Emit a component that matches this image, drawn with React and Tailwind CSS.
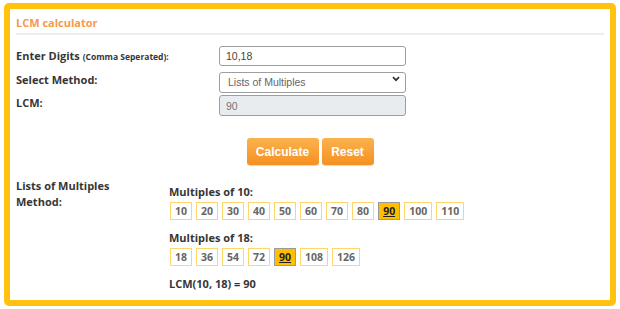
import React from "react";

const m10 = [10, 20, 30, 40, 50, 60, 70, 80, 90, 100, 110];
const m18 = [18, 36, 54, 72, 90, 108, 126];

const Box = ({ n, hit }) => (
  <span
    className={
      hit
        ? "h-[18px] px-[4px] flex items-center border border-[#9a9a9a] bg-[#ffbf00] text-[10.5px] font-bold underline text-[#222]"
        : "h-[18px] px-[4px] flex items-center border border-[#ffd66b] bg-white text-[10.5px] text-[#666]"
    }
  >
    {n}
  </span>
);

const App = () => {
  return (
    <div className="w-[620px] h-[309px] bg-white pt-[3px] pl-[4px]">
      <div className="w-[612px] h-[303px] border-[6px] border-[#ffc30f] rounded-[5px] bg-white font-['Open_Sans',sans-serif] text-[#363636]">
        {/* title */}
        <div className="mx-[6px] pt-[5px] border-b-2 border-[#eeeeee] h-[26px]">
          <h2 className="text-[11px] leading-[18px] font-bold text-[#f7984a]">LCM calculator</h2>
        </div>

        {/* form */}
        <div className="mx-[6px] mt-[11px] flex flex-col gap-[4px]">
          <div className="flex items-center h-[20px]">
            <label className="w-[203px] text-[11px] font-bold">
              Enter Digits <span className="text-[8.5px]">(Comma Seperated):</span>
            </label>
            <input
              defaultValue="10,18"
              className="w-[187px] h-[20px] border border-[#9e9e9e] rounded-[3px] px-[6px] text-[10.5px] text-[#444] font-['Liberation_Sans',sans-serif] outline-none"
            />
          </div>
          <div className="flex items-center h-[21px]">
            <label className="w-[203px] text-[11px] font-bold">Select Method:</label>
            <div className="relative">
              <select className="appearance-none w-[187px] h-[21px] border border-[#9e9e9e] rounded-[3px] pl-[8px] text-[10.5px] text-[#666] font-['Liberation_Sans',sans-serif] bg-white outline-none">
                <option>Lists of Multiples</option>
              </select>
              <svg className="absolute right-[6px] top-[8px]" width="8" height="6" viewBox="0 0 8 6">
                <path d="M1 1.2 L4 4.2 L7 1.2" fill="none" stroke="#333" strokeWidth="1.7" />
              </svg>
            </div>
          </div>
          <div className="flex items-center h-[21px]">
            <label className="w-[203px] text-[11px] font-bold self-start">LCM:</label>
            <input
              readOnly
              value="90"
              className="w-[187px] h-[21px] border border-[#9e9e9e] rounded-[3px] px-[6px] text-[10.5px] text-[#777] bg-[#e9ecef] font-['Liberation_Sans',sans-serif] outline-none"
            />
          </div>
        </div>

        {/* buttons */}
        <div className="flex justify-center gap-[3px] mt-[22px]">
          <button className="w-[72px] h-[27px] rounded-[3px] bg-gradient-to-b from-[#fbb24c] to-[#f5901f] text-white text-[12px] font-bold font-['Liberation_Sans',sans-serif] shadow-[0_1px_1px_rgba(0,0,0,0.15)]">
            Calculate
          </button>
          <button className="w-[52px] h-[27px] rounded-[3px] bg-gradient-to-b from-[#fbb24c] to-[#f5901f] text-white text-[12px] font-bold font-['Liberation_Sans',sans-serif] shadow-[0_1px_1px_rgba(0,0,0,0.15)]">
            Reset
          </button>
        </div>

        {/* result */}
        <div className="mx-[6px] mt-[13px] flex">
          <div className="w-[153px] text-[11px] leading-[16px] font-bold">
            Lists of Multiples
            <br />
            Method:
          </div>
          <div className="pt-[6px] text-[11px] leading-[16px] font-bold">
            <div>Multiples of 10:</div>
            <div className="flex gap-[4px] mt-[2px] ml-[1px]">
              {m10.map((n) => (
                <Box key={n} n={n} hit={n === 90} />
              ))}
            </div>
            <div className="mt-[10px]">Multiples of 18:</div>
            <div className="flex gap-[4px] mt-[2px] ml-[1px]">
              {m18.map((n) => (
                <Box key={n} n={n} hit={n === 90} />
              ))}
            </div>
            <div className="mt-[10px]">LCM(10, 18) = 90</div>
          </div>
        </div>
      </div>
    </div>
  );
};

export default App;
